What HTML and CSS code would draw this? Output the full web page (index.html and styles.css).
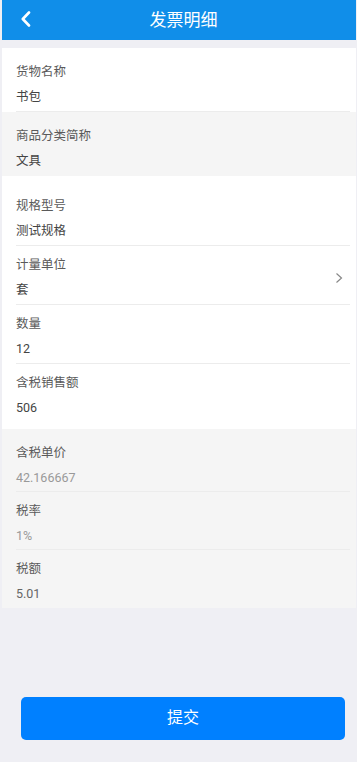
FILE: index.html
```html
<!DOCTYPE html>
<html>
    <head>
        <title>发票明细</title>
        <meta charset="utf-8">
        <link rel="stylesheet" href="styles.css">
    </head>
    <body>
        <div class='page'>
            <div class='navbar'>
                <div class='nav-left'>
                    <svg width='12' height='16' viewBox='0 0 12 16'>
                        <path d='M9 1.5 L2.8 8 L9 14.5' fill='none' stroke='#fff' stroke-width='2.6' stroke-linecap='round' stroke-linejoin='round'/>
                    </svg>
                </div>
                <div class='nav-title'>发票明细</div>
                <div class='nav-right'></div>
            </div>

            <div class='list list-one'>
                <div class='item last'>
                    <div class='item-body'>
                        <div class='label'>货物名称</div>
                        <div class='value'>书包</div>
                    </div>
                </div>
            </div>

            <div class='list list-two grey'>
                <div class='item last noline'>
                    <div class='item-body'>
                        <div class='label'>商品分类简称</div>
                        <div class='value'>文具</div>
                    </div>
                </div>
            </div>

            <div class='list list-three'>
                <div class='item'>
                    <div class='item-body'>
                        <div class='label'>规格型号</div>
                        <div class='value'>测试规格</div>
                    </div>
                </div>
                <div class='item'>
                    <div class='item-body'>
                        <div class='label'>计量单位</div>
                        <div class='value'>套</div>
                    </div>
                    <div class='arrow'>
                        <svg width='8' height='12' viewBox='0 0 8 12'>
                            <path d='M1.5 1.5 L6.5 6 L1.5 10.5' fill='none' stroke='#888' stroke-width='1.2'/>
                        </svg>
                    </div>
                </div>
                <div class='item'>
                    <div class='item-body'>
                        <div class='label'>数量</div>
                        <div class='value'>12</div>
                    </div>
                </div>
                <div class='item noline'>
                    <div class='item-body'>
                        <div class='label'>含税销售额</div>
                        <div class='value'>506</div>
                    </div>
                </div>
            </div>

            <div class='list list-four grey'>
                <div class='item short'>
                    <div class='item-body'>
                        <div class='label'>含税单价</div>
                        <div class='value disabled'>42.166667</div>
                    </div>
                </div>
                <div class='item short'>
                    <div class='item-body'>
                        <div class='label'>税率</div>
                        <div class='value disabled'>1%</div>
                    </div>
                </div>
                <div class='item short noline'>
                    <div class='item-body'>
                        <div class='label'>税额</div>
                        <div class='value muted'>5.01</div>
                    </div>
                </div>
            </div>

            <div class='btn-wrap'>
                <div class='btn'>提交</div>
            </div>
        </div>
    </body>
</html>
```

FILE: styles.css
```css
html, body
{
    margin: 0;
    padding: 0;
}

body
{
    background-color: #efeff4;
    font-family: Roboto, "Noto Sans CJK SC", sans-serif;
}

.page
{
    margin-left: 2px;
    width: 354px;
}

.navbar
{
    display: flex;
    align-items: center;
    height: 40px;
    background-color: #108ee9;
    color: #fff;
}

.nav-left
{
    width: 62px;
    padding-left: 18px;
    padding-top: 2px;
}

.nav-title
{
    flex: 1;
    text-align: center;
    font-size: 17px;
    padding-bottom: 3px;
}

.nav-right
{
    width: 71px;
}

.list
{
    background-color: #fff;
}

.grey
{
    background-color: #f5f5f5;
}

.list-one
{
    margin-top: 8px;
    padding-top: 5px;
}

.list-two
{
    padding-top: 5px;
    padding-bottom: 1px;
}

.list-three
{
    padding-top: 11px;
    padding-bottom: 7px;
}

.list-four
{
    padding-top: 5px;
    padding-bottom: 1px;
}

.item
{
    display: flex;
    align-items: center;
    margin-left: 14px;
    margin-right: 6px;
    padding: 9px 0 4px 0;
    border-bottom: 1px solid #ececec;
}

.item.short
{
    padding-bottom: 3px;
}

.item.noline
{
    border-bottom: none;
}

.item-body
{
    flex: 1;
}

.label
{
    font-size: 12.5px;
    line-height: 20px;
    color: #5a5a5a;
}

.value
{
    margin-top: 5px;
    font-size: 12.5px;
    line-height: 20px;
    color: #444;
}

.value.disabled
{
    color: #999;
}

.value.muted
{
    color: #666;
}

.arrow
{
    padding-right: 7px;
    padding-top: 2px;
}

.btn-wrap
{
    margin-top: 89px;
    padding-left: 19px;
}

.btn
{
    width: 324px;
    height: 43px;
    line-height: 42px;
    border-radius: 5px;
    background-color: #0080ff;
    color: #fff;
    text-align: center;
    font-size: 16px;
}
```
